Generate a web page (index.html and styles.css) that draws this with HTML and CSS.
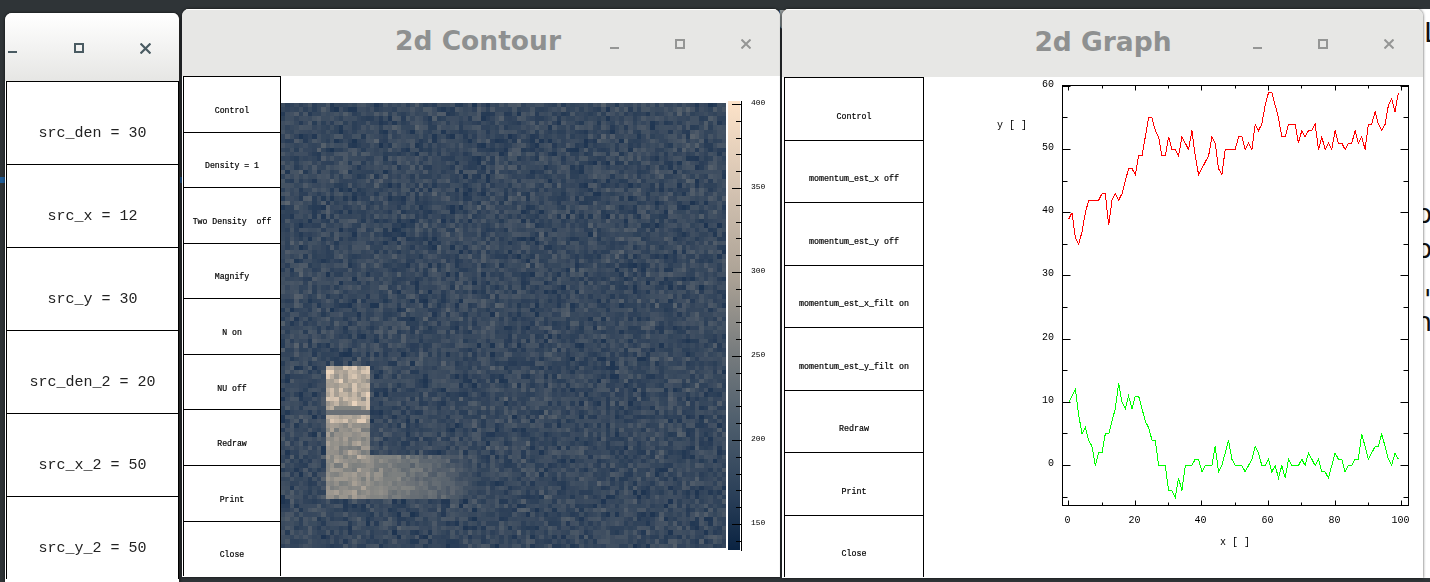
FILE: index.html
```html
<!DOCTYPE html>
<html lang="en">
<head>
<meta charset="utf-8">
<title>2d windows</title>
<link rel="stylesheet" href="styles.css">
</head>
<body>
<main class="desktop">
  <div class="topbar"><span class="topbar-text">Desktop/lectures/Documents/Computational Physics/HW7</span></div>
  <div class="behind-right"><span class="g-l">L</span><span class="g-p g-p1">p</span><span class="g-p g-p2">p</span><span class="g-c">'</span><span class="g-p g-n">n</span></div>
  <div class="behind-left"><span class="g-cc">c</span><i class="blue"></i></div>

  <section class="win win-src">
    <header class="title title-src">
      <svg class="btn btn-min" viewBox="0 0 10 10"><rect x="0" y="7" width="9" height="2"/></svg>
      <svg class="btn btn-max" viewBox="0 0 10 10"><rect x="1" y="1" width="8" height="8" fill="none" stroke-width="2"/></svg>
      <svg class="btn btn-close" viewBox="0 0 10 10"><path d="M0.5 0.5L9.5 9.5M9.5 0.5L0.5 9.5" fill="none" stroke-width="2"/></svg>
    </header>
    <div class="col col-src">
      <div class="cell">src_den = 30</div>
      <div class="cell">src_x = 12</div>
      <div class="cell">src_y = 30</div>
      <div class="cell">src_den_2 = 20</div>
      <div class="cell">src_x_2 = 50</div>
      <div class="cell">src_y_2 = 50</div>
    </div>
  </section>

  <section class="win win-contour">
    <header class="title title-grey">
      <h1>2d Contour</h1>
      <svg class="btn btn-min" viewBox="0 0 10 10"><rect x="0" y="7" width="9" height="2"/></svg>
      <svg class="btn btn-max" viewBox="0 0 10 10"><rect x="1" y="1" width="8" height="8" fill="none" stroke-width="2"/></svg>
      <svg class="btn btn-close" viewBox="0 0 10 10"><path d="M0.5 0.5L9.5 9.5M9.5 0.5L0.5 9.5" fill="none" stroke-width="2"/></svg>
    </header>
    <div class="body">
      <div class="col col-contour">
        <div class="cell">Control</div>
        <div class="cell">Density = 1</div>
        <div class="cell">Two Density&nbsp; off</div>
        <div class="cell">Magnify</div>
        <div class="cell">N on</div>
        <div class="cell">NU off</div>
        <div class="cell">Redraw</div>
        <div class="cell">Print</div>
        <div class="cell">Close</div>
      </div>
      <div class="plot-area">
        <canvas id="heat" class="heat" width="100" height="100"></canvas>
        <div class="cbar"></div>
        <svg id="cbar-axis" class="cbar-axis" viewBox="0 0 60 470" width="60" height="470"></svg>
      </div>
    </div>
  </section>

  <section class="win win-graph">
    <header class="title title-grey">
      <h1>2d Graph</h1>
      <svg class="btn btn-min" viewBox="0 0 10 10"><rect x="0" y="7" width="9" height="2"/></svg>
      <svg class="btn btn-max" viewBox="0 0 10 10"><rect x="1" y="1" width="8" height="8" fill="none" stroke-width="2"/></svg>
      <svg class="btn btn-close" viewBox="0 0 10 10"><path d="M0.5 0.5L9.5 9.5M9.5 0.5L0.5 9.5" fill="none" stroke-width="2"/></svg>
    </header>
    <div class="body">
      <div class="col col-graph">
        <div class="cell">Control</div>
        <div class="cell">momentum_est_x off</div>
        <div class="cell">momentum_est_y off</div>
        <div class="cell">momentum_est_x_filt on</div>
        <div class="cell">momentum_est_y_filt on</div>
        <div class="cell">Redraw</div>
        <div class="cell">Print</div>
        <div class="cell">Close</div>
      </div>
      <svg id="graph" class="graph" viewBox="924 77 498 501" width="498" height="501"></svg>
    </div>
  </section>
</main>
<script src="script.js"></script>
</body>
</html>
```
FILE: styles.css
```css
* { box-sizing: border-box; }
html, body { margin: 0; height: 100%; overflow: hidden; background: #fff; }
.desktop { position: relative; width: 1430px; height: 582px; overflow: hidden; background: #fff; font-family: "Liberation Mono", monospace; }

.topbar { position: absolute; left: 0; top: 0; width: 100%; height: 582px; background: #2f3437; overflow: hidden; }
.topbar-text { position: absolute; right: 330px; top: 5px; font: bold 27px/30px "DejaVu Sans", sans-serif; color: #9a9fa0; white-space: nowrap; }

.behind-right { position: absolute; left: 1418px; top: 9px; width: 12px; height: 569px; background: #fff; font: 27px/30px "DejaVu Sans", sans-serif; color: #111; overflow: hidden; }
.behind-right span { position: absolute; }
.g-l { left: 6px; top: 9px; }
.g-p { left: -3px; }
.g-p1 { top: 190px; }
.g-p2 { top: 225px; }
.g-c { left: 6px; top: 276px; }
.g-n { top: 298px; }
.behind-left { position: absolute; left: 0; top: 9px; width: 200px; height: 569px; overflow: hidden; }
.g-cc { position: absolute; left: -12px; top: 118px; font: bold 20px/24px "DejaVu Sans", sans-serif; color: #6b6f71; }
.blue { position: absolute; left: 0; top: 168px; width: 200px; height: 6px; background: #1f5d99; }

.win { position: absolute; background: #fff; border-radius: 7px 7px 0 0; overflow: hidden; box-shadow: 0 0 3px rgba(0,0,0,.75); }
.win-src { left: 5px; top: 13px; width: 175px; height: 569px; border-right: 1px solid #222; }
.win-contour { left: 182px; top: 9px; width: 598px; height: 568px; }
.win-graph { left: 782px; top: 9px; width: 641px; height: 569px; }

.title { position: relative; flex: none; border-top: 1px solid #fff; }
.title-src { height: 68px; background: linear-gradient(#fff, #e6e6e4); }
.title-grey { height: 67px; background: #e7e7e5; }
.win-graph .title-grey { height: 68px; }
.title h1 { margin: 0; text-align: center; font: bold 26.5px/62px "DejaVu Sans", sans-serif; color: #8e9090; padding-right: 6px; }
.win-graph .title h1 { padding: 0 0 0 1px; line-height: 64px; }

.btn { position: absolute; width: 10px; height: 10px; }
.btn rect, .btn path { stroke: #959695; }
.btn-min rect { fill: #959695; stroke: none; }
.title-src .btn rect, .title-src .btn path { stroke: #4a5b62; }
.title-src .btn-min rect { fill: #4a5b62; stroke: none; }

.title-src .btn-min { left: 3px; top: 30px; }
.title-src .btn-max { left: 69px; top: 29px; }
.title-src .btn-close { left: 135px; top: 29px; width: 11px; height: 11px; }
.win-contour .btn-min { left: 428px; top: 30px; }
.win-contour .btn-max { left: 493px; top: 29px; }
.win-contour .btn-close { left: 559px; top: 29px; }
.win-graph .btn-min { left: 471px; top: 30px; }
.win-graph .btn-max { left: 536px; top: 29px; }
.win-graph .btn-close { left: 602px; top: 29px; }

.body { display: flex; height: 501px; background: #fff; }
.col { display: flex; flex-direction: column; flex: none; border-left: 1px solid #000; border-right: 1px solid #000; will-change: transform; }
.cell { flex: 1 1 0; display: flex; align-items: center; justify-content: center; border-top: 1px solid #000; color: #000; white-space: pre; }

.col-src { margin-left: 1px; width: 173px; height: 498px; font-size: 15px; }
.col-src .cell { padding-top: 20px; color: #222; }
.col-contour { margin-left: 1px; width: 98px; height: 500px; font-size: 8.2px; -webkit-text-stroke: .2px #000; }
.col-contour .cell { padding-top: 12px; }
.col-graph { margin-left: 2px; width: 140px; height: 500px; font-size: 8.33px; -webkit-text-stroke: .2px #000; }
.col-graph .cell { padding-top: 16px; }

.plot-area { position: relative; flex: 1; }
.heat { position: absolute; left: 0; top: 27px; width: 445px; height: 445px; image-rendering: pixelated; }
.cbar { position: absolute; left: 447px; top: 25px; width: 12px; height: 449px; background: linear-gradient(#fde3c9 0%, #d3c2b1 20%, #a9a094 40%, #7a7e7f 55%, #4d5d6c 72%, #2a3f58 88%, #0a2342 100%); }
.cbar-axis { position: absolute; left: 448px; top: 20px; will-change: transform; }
.cbar-axis line { stroke: #000; stroke-width: 1; }
.cbar-axis text, .graph text { font-family: "Liberation Mono", monospace; fill: #000; -webkit-text-stroke: .2px #000; }
.cbar-axis text { font-size: 8px; }

.graph { display: block; flex: none; will-change: transform; }
.graph .axis { fill: none; stroke: #000; stroke-width: 1; }
.graph text { font-size: 10px; }
.graph .ln { fill: none; stroke-width: 1; shape-rendering: crispEdges; }
.ln-red { stroke: #ff0000; }
.ln-green { stroke: #00ff00; }
```
FILE: script.js
```js
(function () {
  var NS = 'http://www.w3.org/2000/svg';
  function el(parent, tag, attrs, text) {
    var e = document.createElementNS(NS, tag);
    for (var k in attrs) e.setAttribute(k, attrs[k]);
    if (text !== undefined) e.textContent = text;
    parent.appendChild(e);
    return e;
  }
  var seed = 20240607;
  function rnd() {
    seed = (seed + 0x6D2B79F5) | 0;
    var z = Math.imul(seed ^ (seed >>> 15), 1 | seed);
    z = (z + Math.imul(z ^ (z >>> 7), 61 | z)) ^ z;
    return ((z ^ (z >>> 14)) >>> 0) / 4294967296;
  }

  var stops = [[0, 10, 35, 66], [.3, 32, 54, 82], [.5, 78, 90, 104], [.7, 124, 127, 127], [.85, 172, 163, 151], [1, 253, 227, 201]];
  function cmap(t) {
    t = Math.max(0, Math.min(1, t));
    for (var i = 1; i < stops.length; i++) {
      if (t <= stops[i][0]) {
        var a = stops[i - 1], b = stops[i], f = (t - a[0]) / (b[0] - a[0]);
        return 'rgb(' + [1, 2, 3].map(function (c) { return Math.round(a[c] + (b[c] - a[c]) * f); }).join(',') + ')';
      }
    }
    return 'rgb(253,227,201)';
  }

  var ctx = document.getElementById('heat').getContext('2d');
  for (var r = 0; r < 100; r++) {
    for (var c = 0; c < 100; c++) {
      var n = (rnd() + rnd() + rnd()) / 3 - .5;
      var t = .405 + n * .32;
      if (c >= 10 && c < 20 && r >= 59 && r < 89) {
        var k = r < 72 ? .87 : .77;
        t = k + n * .28;
        if (r === 69) t = .62;
        if (r === 68 && c > 11 && c < 18) t = .72;
      } else if (c >= 20 && r >= 79 && r < 89) {
        var fade = 1 - (c - 20) / 24;
        if (fade > 0) t = .42 + .33 * fade + n * .22;
      }
      ctx.fillStyle = cmap(t);
      ctx.fillRect(c, r, 1, 1);
    }
  }

  var ca = document.getElementById('cbar-axis');
  el(ca, 'line', { x1: 12.5, y1: 5, x2: 12.5, y2: 455 });
  for (var i = 0; i <= 26; i++) {
    var y = 8.5 + Math.round(i * 16.8);
    var major = i % 5 === 0;
    el(ca, 'line', { x1: major ? 3 : 7, y1: y, x2: 12.5, y2: y });
    if (major) el(ca, 'text', { x: 22, y: y }, String(400 - i * 10));
  }

  var red = [39,40,36,35,37,40,42,42,42,42,43,43,38,42,43,42,43,45,47,47,46,49,49,52,55,55,53,52,49,49,52,50,50,49,52,51,50,53,49,46,47,48,49,52,51,47,46,50,50,50,50,52,52,50,51,50,54,53,54,57,59,59,57,55,52,52,54,54,54,51,53,52,53,53,54,50,52,50,51,50,53,51,51,50,51,51,53,51,52,50,54,54,56,54,53,54,57,58,56,59];
  var green = [10,11,12,8,5,6,4,3,0,2,2,5,5,7,9,13,10,9,11,9,11,11,9,7,6,4,4,0,0,0,-4,-4,-5,-2,-4,0,0,0,1,1,-1,0,0,0,3,-1,0,2,4,1,0,0,0,-1,0,1,3,2,0,0,1,-1,0,-2,0,-2,1,0,0,0,1,0,2,1,0,1,-1,-1,-2,0,2,1,1,-1,0,0,1,1,5,3,1,2,3,3,5,3,1,0,2,1];
  var sx = function (v) { return 1068.7 + v * 3.33; };
  var sy = function (v) { return 465.5 - v * 6.32; };
  var g = document.getElementById('graph');
  var L = 1062.5, R = 1408.5, T = 85.5, B = 505.5;
  el(g, 'rect', { 'class': 'axis', x: L, y: T, width: R - L, height: B - T });

  function tick(x1, y1, x2, y2) { el(g, 'path', { 'class': 'axis', d: 'M' + x1 + ' ' + y1 + 'L' + x2 + ' ' + y2 }); }
  for (var v = -5; v <= 60; v += 5) {
    var yy = Math.floor(sy(v)) + .5;
    var m = v % 10 === 0;
    tick(L, yy, L + (m ? 8 : 5), yy);
    tick(R, yy, R - (m ? 8 : 5), yy);
    if (m) el(g, 'text', { x: 1054, y: yy, 'text-anchor': 'end' }, String(v));
  }
  for (var u = 0; u <= 100; u += 10) {
    var xx = Math.floor(sx(u)) + .5;
    var mj = u % 20 === 0;
    tick(xx, T, xx, T + (mj ? 5 : 3));
    tick(xx, B, xx, B - (mj ? 5 : 3));
    if (mj) el(g, 'text', { x: xx - 1, y: 523, 'text-anchor': 'middle' }, String(u));
  }
  el(g, 'text', { x: 1012, y: 128, 'text-anchor': 'middle' }, 'y [ ]');
  el(g, 'text', { x: 1235, y: 545, 'text-anchor': 'middle' }, 'x [ ]');

  function line(data, cls) {
    el(g, 'polyline', { 'class': 'ln ' + cls, points: data.map(function (d, i) { return sx(i).toFixed(1) + ',' + sy(d).toFixed(1); }).join(' ') });
  }
  line(red, 'ln-red');
  line(green, 'ln-green');
})();
```
